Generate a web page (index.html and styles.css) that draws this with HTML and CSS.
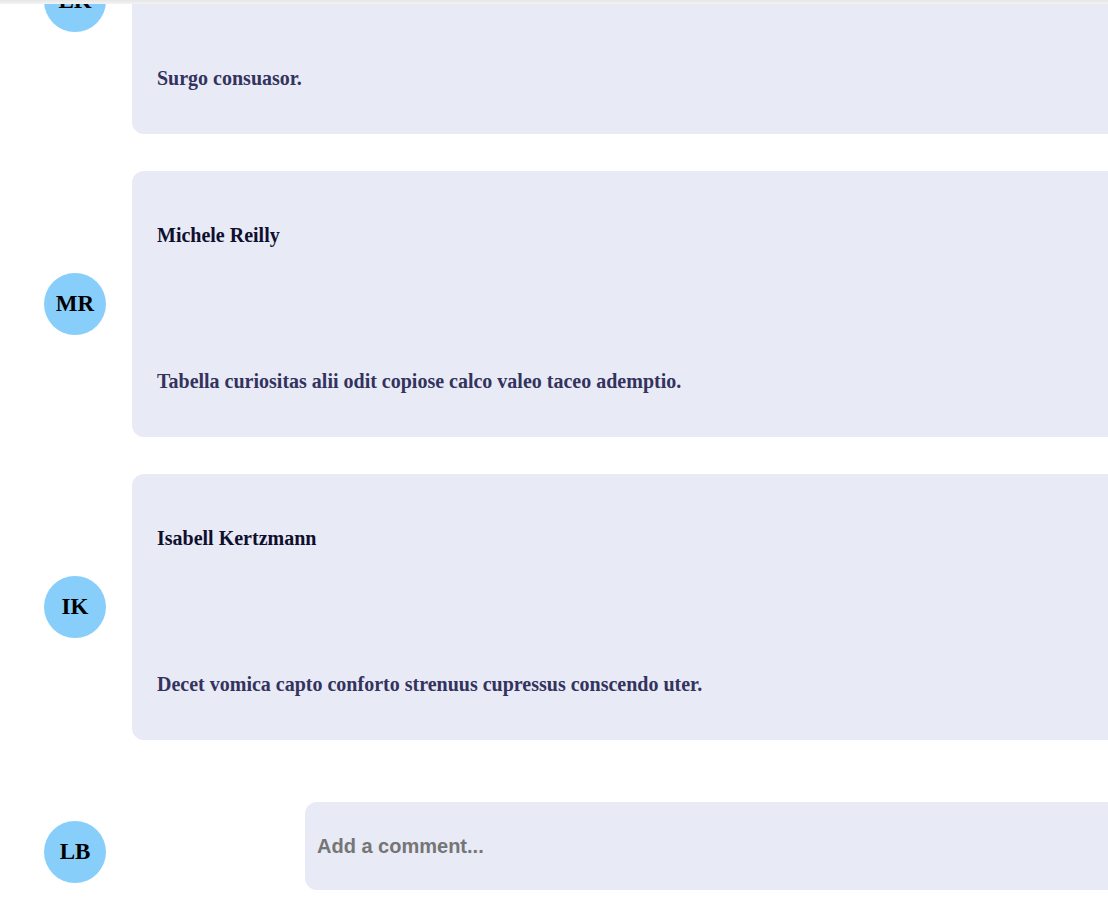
FILE: index.html
```html
<!DOCTYPE html>
<html lang="en">
<head>
<meta charset="utf-8">
<title>Comments</title>
<link rel="stylesheet" href="styles.css">
</head>
<body>
<div class="topbar"></div>
<main class="thread">
  <section class="comment">
    <div class="avatar">LK</div>
    <div class="card">
      <h3 class="name">Lonnie Kuhn</h3>
      <p class="text">Surgo consuasor.</p>
    </div>
  </section>
  <section class="comment">
    <div class="avatar">MR</div>
    <div class="card">
      <h3 class="name">Michele Reilly</h3>
      <p class="text">Tabella curiositas alii odit copiose calco valeo taceo ademptio.</p>
    </div>
  </section>
  <section class="comment">
    <div class="avatar">IK</div>
    <div class="card">
      <h3 class="name">Isabell Kertzmann</h3>
      <p class="text">Decet vomica capto conforto strenuus cupressus conscendo uter.</p>
    </div>
  </section>
  <form class="composer">
    <div class="avatar composer-avatar">LB</div>
    <input class="composer-input" type="text" placeholder="Add a comment...">
  </form>
</main>
</body>
</html>
```

FILE: styles.css
```css
html, body {
  margin: 0;
  padding: 0;
  overflow: hidden;
  background: #ffffff;
}

body {
  font-family: "Liberation Serif", "Times New Roman", serif;
}

.topbar {
  position: fixed;
  top: 0;
  left: 0;
  right: 0;
  height: 4px;
  background: linear-gradient(#e6e6e6, #f3f3f3);
  z-index: 5;
}

.thread {
  width: 1200px;
  margin-top: -132px;
  padding-left: 44px;
  display: flex;
  flex-direction: column;
  gap: 37px;
}

.comment {
  display: flex;
  align-items: center;
  gap: 26px;
}

.avatar {
  flex: 0 0 62px;
  width: 62px;
  height: 62px;
  border-radius: 50%;
  background: #87cefa;
  color: #000;
  font-weight: bold;
  font-size: 23px;
  display: flex;
  align-items: center;
  justify-content: center;
}

.card {
  flex: 1;
  height: 266px;
  box-sizing: border-box;
  background: #e8eaf6;
  border-radius: 12px;
  padding: 52px 25px 44px;
  display: flex;
  flex-direction: column;
  justify-content: space-between;
}

.name {
  margin: 0;
  font-size: 20px;
  line-height: 24px;
  font-weight: bold;
  color: #0f0f2e;
}

.text {
  margin: 0;
  font-size: 20px;
  line-height: 24px;
  font-weight: bold;
  color: #33335e;
}

.composer {
  margin: 25px 0 0;
  display: flex;
  align-items: flex-start;
  gap: 199px;
}

.composer-avatar {
  margin-top: 19px;
}

.composer-input {
  flex: 1;
  height: 88px;
  box-sizing: border-box;
  border: none;
  outline: none;
  border-radius: 12px;
  background: #e8eaf6;
  padding: 0 12px;
  font-family: "Liberation Sans", Arial, sans-serif;
  font-weight: bold;
  font-size: 20px;
  color: #333;
}

.composer-input::placeholder {
  color: #757575;
}
```
